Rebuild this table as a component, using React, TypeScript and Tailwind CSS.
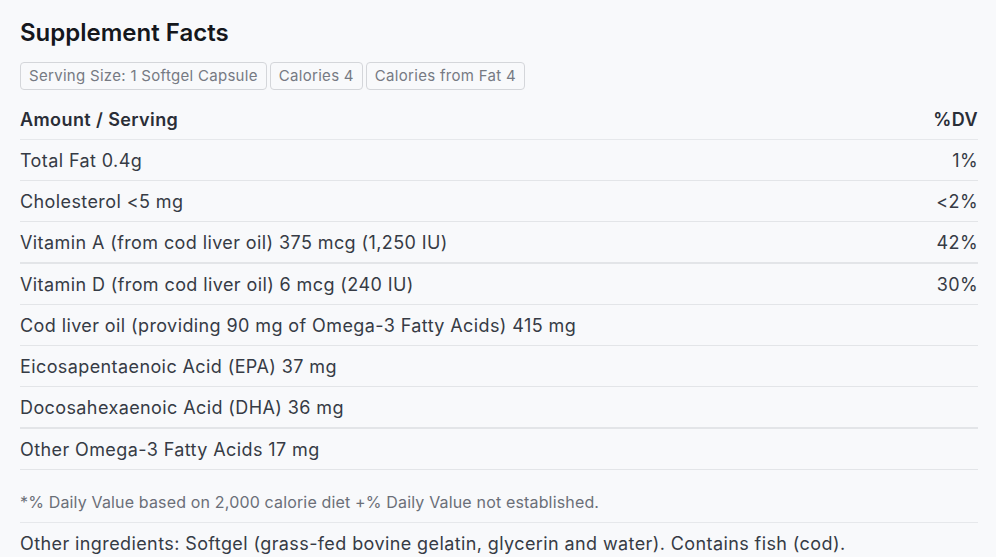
const rows: { label: string; dv?: string; thick?: boolean }[] = [
  { label: "Total Fat 0.4g", dv: "1%" },
  { label: "Cholesterol <5 mg", dv: "<2%" },
  { label: "Vitamin A (from cod liver oil) 375 mcg (1,250 IU)", dv: "42%", thick: true },
  { label: "Vitamin D (from cod liver oil) 6 mcg (240 IU)", dv: "30%" },
  { label: "Cod liver oil (providing 90 mg of Omega-3 Fatty Acids) 415 mg" },
  { label: "Eicosapentaenoic Acid (EPA) 37 mg" },
  { label: "Docosahexaenoic Acid (DHA) 36 mg", thick: true },
  { label: "Other Omega-3 Fatty Acids 17 mg" },
];

const badges = ["Serving Size: 1 Softgel Capsule", "Calories 4", "Calories from Fat 4"];

export default function App() {
  return (
    <div
      className="min-h-screen bg-[#f8f9fb] pt-[17px] pl-5 pr-[18px] text-[#363b45]"
      style={{ fontFamily: "Inter, 'Noto Sans', sans-serif" }}
    >
      <h2 className="text-2xl font-semibold text-[#15171c] leading-8">Supplement Facts</h2>

      <div className="mt-[13px] flex gap-[3px]">
        {badges.map((b) => (
          <span
            key={b}
            className="h-[28px] pt-px px-2 flex items-center rounded border border-[#d4d6da] text-[15px] tracking-[0.02em] text-[#767a83]"
          >
            {b}
          </span>
        ))}
      </div>

      <div className="mt-[9px] tracking-[0.025em]">
        <div className="flex justify-between pt-[7px] pb-[5px] border-b border-[#e6e8eb] text-lg leading-7 font-semibold text-[#2a2e37]">
          <span>Amount / Serving</span>
          <span>%DV</span>
        </div>
        {rows.map((r) => (
          <div
            key={r.label}
            className={`flex justify-between pt-[7px] pb-[5px] border-[#e3e5e8] text-lg leading-7 ${r.thick ? "border-b-2" : "border-b"}`}
          >
            <span>{r.label}</span>
            {r.dv && <span>{r.dv}</span>}
          </div>
        ))}
        <p className="pt-[21px] pb-[9px] border-b border-[#e6e8eb] text-base leading-[22px] tracking-[0.01em] text-[#6b6f78]">
          *% Daily Value based on 2,000 calorie diet +% Daily Value not established.
        </p>
        <p className="pt-[7px] text-lg leading-7">
          Other ingredients: Softgel (grass-fed bovine gelatin, glycerin and water). Contains fish (cod).
        </p>
      </div>
    </div>
  );
}
